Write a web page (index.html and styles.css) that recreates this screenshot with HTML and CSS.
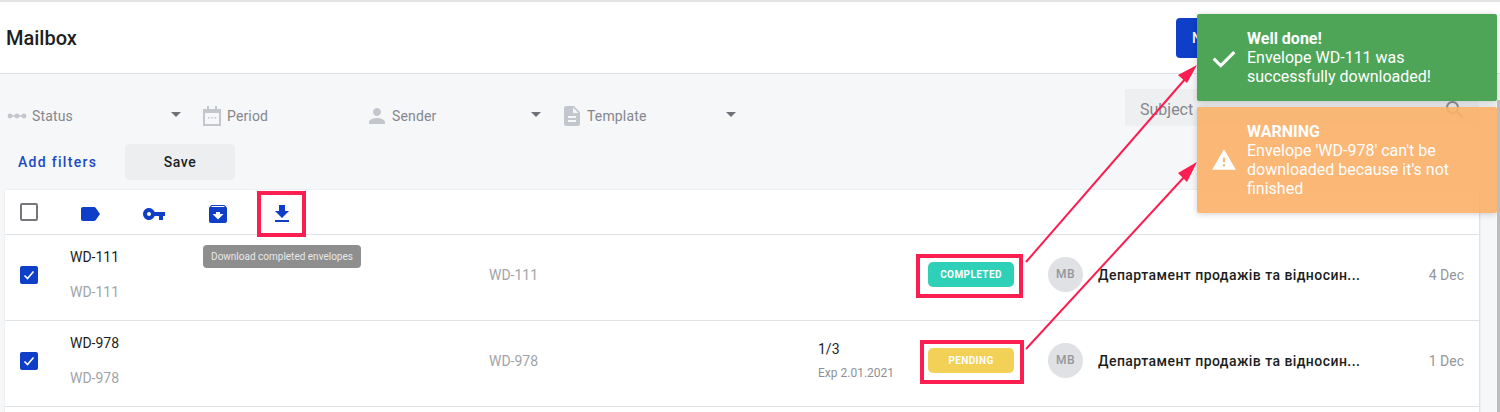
FILE: index.html
```html
<!DOCTYPE html>
<html>
<head>
  <title>Mailbox</title>
  <meta name="viewport" content="width=device-width, initial-scale=1">
  <link rel="stylesheet" href="styles.css">
</head>
<body>
  <div class="page">
    <header class="topbar">
      <h1>Mailbox</h1>
      <button class="new-btn">New</button>
    </header>

    <section class="filters">
      <div class="filter-row">
        <div class="filter filter-status">
          <svg class="filter-icon" width="20" height="8" viewBox="0 0 20 8"><path d="M3 4h14" stroke="#c3c6cc" stroke-width="1.5"/><circle cx="3" cy="4" r="2.4" fill="#c3c6cc"/><circle cx="10" cy="4" r="2.4" fill="#c3c6cc"/><circle cx="17" cy="4" r="2.4" fill="#c3c6cc"/></svg>
          <span>Status</span>
          <i class="caret"></i>
        </div>
        <div class="filter filter-period">
          <svg class="filter-icon" width="18" height="20" viewBox="0 0 18 20"><path d="M1 4h16v15H1z" fill="none" stroke="#c3c6cc" stroke-width="2"/><path d="M1 3h16v4H1zM4 0h2v4H4zM12 0h2v4h-2z" fill="#c3c6cc"/><path d="M5 11h1.500v1.500H5zM8.300 11h1.500v1.500H8.300zM11.600 11h1.500v1.500h-1.500z" fill="#c3c6cc"/></svg>
          <span>Period</span>
        </div>
        <div class="filter filter-sender">
          <svg class="filter-icon" width="16" height="16" viewBox="4 4 16 16"><path d="M12 12c2.210 0 4-1.790 4-4s-1.790-4-4-4-4 1.790-4 4 1.790 4 4 4zm0 2c-2.670 0-8 1.340-8 4v2h16v-2c0-2.660-5.330-4-8-4z" fill="#c3c6cc"/></svg>
          <span>Sender</span>
          <i class="caret"></i>
        </div>
        <div class="filter filter-template">
          <svg class="filter-icon" width="16" height="20" viewBox="4 2 16 20"><path d="M14 2H6c-1.100 0-1.990.9-1.990 2L4 20c0 1.100.89 2 1.990 2H18c1.100 0 2-.9 2-2V8l-6-6zm2 16H8v-2h8v2zm0-4H8v-2h8v2zm-3-5V3.500L18.500 9H13z" fill="#c3c6cc"/></svg>
          <span>Template</span>
          <i class="caret"></i>
        </div>
        <div class="subject-search">
          <span>Subject</span>
          <svg width="24" height="24" viewBox="0 0 24 24"><path d="M15.500 14h-.79l-.28-.27C15.410 12.590 16 11.110 16 9.500 16 5.910 13.090 3 9.500 3S3 5.910 3 9.500 5.910 16 9.500 16c1.610 0 3.090-.59 4.230-1.570l.27.28v.79l5 4.990L20.490 19l-4.990-5zm-6 0C7.010 14 5 11.990 5 9.500S7.010 5 9.500 5 14 7.010 14 9.500 11.990 14 9.500 14z" fill="#8d9095"/></svg>
        </div>
      </div>
      <div class="filter-actions">
        <a class="add-filters">Add filters</a>
        <button class="save-btn">Save</button>
      </div>
    </section>

    <section class="card">
      <div class="toolbar">
        <span class="checkbox"></span>
        <svg class="tool" width="24" height="24" viewBox="0 0 24 24"><path d="M17.630 5.840C17.270 5.330 16.670 5 16 5L5 5.010C3.900 5.010 3 5.900 3 7v10c0 1.100.9 1.990 2 1.990L16 19c.67 0 1.270-.33 1.630-.84L22 12l-4.370-6.160z"/></svg>
        <svg class="tool" width="24" height="24" viewBox="0 0 24 24"><path d="M12.650 10C11.830 7.670 9.610 6 7 6c-3.310 0-6 2.690-6 6s2.690 6 6 6c2.610 0 4.830-1.670 5.650-4H17v4h4v-4h2v-4H12.650zM7 14c-1.100 0-2-.9-2-2s.9-2 2-2 2 .9 2 2-.9 2-2 2z"/></svg>
        <svg class="tool" width="24" height="24" viewBox="0 0 24 24"><path d="M20.540 5.230l-1.390-1.680C18.880 3.210 18.470 3 18 3H6c-.47 0-.88.21-1.160.55L3.460 5.230C3.170 5.570 3 6.020 3 6.500V19c0 1.100.9 2 2 2h14c1.100 0 2-.9 2-2V6.500c0-.48-.17-.93-.46-1.270zM12 17.500L6.500 12H10v-2h4v2h3.500L12 17.500zM5.120 5l.81-1h12l.94 1H5.120z"/></svg>
        <svg class="tool" width="24" height="24" viewBox="0 0 24 24"><path d="M19 9h-4V3H9v6H5l7 7 7-7zM5 18v2h14v-2H5z"/></svg>
      </div>

      <div class="row">
        <span class="checkbox checked"><svg width="18" height="18" viewBox="0 0 18 18"><path d="M4.500 9.500l3 3 6-7" fill="none" stroke="#fff" stroke-width="1.600"/></svg></span>
        <div class="name"><div>WD-111</div><div class="muted">WD-111</div></div>
        <div class="muted subject">WD-111</div>
        <div class="signed"></div>
        <div><span class="badge badge-completed">COMPLETED</span></div>
        <div class="avatar">MB</div>
        <div class="sender">Департамент продажів та відносин...</div>
        <div class="date">4 Dec</div>
      </div>

      <div class="row">
        <span class="checkbox checked"><svg width="18" height="18" viewBox="0 0 18 18"><path d="M4.500 9.500l3 3 6-7" fill="none" stroke="#fff" stroke-width="1.600"/></svg></span>
        <div class="name"><div>WD-978</div><div class="muted">WD-978</div></div>
        <div class="muted subject">WD-978</div>
        <div class="signed"><div>1/3</div><div class="exp">Exp 2.01.2021</div></div>
        <div><span class="badge badge-pending">PENDING</span></div>
        <div class="avatar">MB</div>
        <div class="sender">Департамент продажів та відносин...</div>
        <div class="date">1 Dec</div>
      </div>
    </section>
  </div>

  <div class="tooltip">Download completed envelopes</div>

  <!-- red marks drawn on top of the screenshot -->
  <svg class="marks" width="1500" height="412" viewBox="0 0 1500 412">
    <g fill="none" stroke="#fb1e51" stroke-width="4">
      <rect x="259" y="193" width="45" height="42"/>
      <rect x="918" y="256" width="103" height="40"/>
      <rect x="922" y="342" width="100" height="40"/>
    </g>
    <g stroke="#fb1e51" stroke-width="2">
      <path d="M1026 262L1186 78"/>
      <path d="M1026 349L1186 175"/>
    </g>
    <g fill="#fb1e51">
      <path d="M1197 65L1187 83L1178 75z"/>
      <path d="M1197 162L1187 182L1178 173z"/>
    </g>
  </svg>

  <div class="toast toast-success">
    <svg width="26" height="26" viewBox="0 0 24 24"><path d="M1.500 13.500L3.500 11.500L9 17L20.500 5.500L22.500 7.500L9 21z" fill="#fff"/></svg>
    <div>
      <b>Well done!</b>
      <div>Envelope WD-111 was successfully downloaded!</div>
    </div>
  </div>
  <div class="toast toast-warning">
    <svg width="26" height="26" viewBox="0 0 24 24"><path d="M1 21h22L12 2 1 21zm12-3h-2v-2h2v2zm0-4h-2v-4h2v4z" fill="#fff"/></svg>
    <div>
      <b>WARNING</b>
      <div>Envelope 'WD-978' can't be downloaded because it's not finished</div>
    </div>
  </div>

  <div class="edge-strip"></div>
</body>
</html>
```

FILE: styles.css
```css
/* Common styles */
body {
  margin: 0;
  background-color: #f6f7f9;
  color: #1c1e21;
  font-family: Roboto, "Liberation Sans", sans-serif;
  overflow: hidden;
}

.page {
  width: 1500px;
  height: 412px;
  overflow: hidden;
  border-top: 2px solid #e3e4e6;
  box-sizing: border-box;
}

button {
  border: none;
  font-family: inherit;
}

/* Header */
.topbar {
  height: 72px;
  box-sizing: border-box;
  display: flex;
  align-items: center;
  justify-content: space-between;
  padding: 0 21px 0 6px;
  background-color: #fff;
  border-bottom: 1px solid #dfe1e4;
}

.topbar h1 {
  margin: 0;
  font-size: 20px;
  font-weight: 500;
}

.new-btn {
  width: 303px;
  height: 40px;
  margin-top: 1px;
  padding: 0 0 0 16px;
  text-align: left;
  background-color: #0f3fc9;
  color: #fff;
  font-size: 14px;
  font-weight: 500;
  border-radius: 4px;
}

/* Filters */
.filters {
  height: 116px;
  box-sizing: border-box;
  padding-top: 15px;
}

.filter-row {
  display: flex;
  align-items: flex-start;
  height: 37px;
  padding-right: 21px;
}

.filter {
  display: flex;
  align-items: center;
  height: 36px;
  margin-top: 9px;
  padding-left: 7px;
  font-size: 14px;
  letter-spacing: 0.15px;
  color: #84878d;
  box-sizing: border-box;
}

.filter-status { width: 196px; }
.filter-period { width: 166px; }
.filter-sender { width: 195px; }
.filter-template { width: 568px; }

.filter-status .filter-icon { margin-right: 5px; }
.filter-period .filter-icon { margin-right: 6px; }
.filter-sender .filter-icon { margin-right: 7px; }
.filter-template .filter-icon { margin-right: 7px; }

.caret {
  width: 0;
  height: 0;
  margin-bottom: 4px;
  border-left: 5px solid transparent;
  border-right: 5px solid transparent;
  border-top: 5px solid #6f7278;
}

.filter-status .caret { margin-left: 98px; }
.filter-sender .caret { margin-left: 95px; }
.filter-template .caret { margin-left: 80px; }

.subject-search {
  flex: 1;
  height: 37px;
  display: flex;
  align-items: center;
  justify-content: space-between;
  padding: 0 12px 0 15px;
  background-color: #eeeff1;
  color: #84878d;
  font-size: 16px;
}

.subject-search span { margin-top: 3px; }
.subject-search svg { margin-top: 4px; }

.filter-actions {
  display: flex;
  align-items: center;
  margin-top: 18px;
  padding-left: 18px;
}

.add-filters {
  width: 107px;
  color: #1b49c4;
  font-size: 14px;
  font-weight: 500;
  letter-spacing: 1.3px;
}

.save-btn {
  width: 110px;
  height: 36px;
  background-color: #edeef0;
  color: #1c1e21;
  font-size: 14px;
  font-weight: 500;
  letter-spacing: 0.6px;
  border-radius: 4px;
}

/* Table card */
.card {
  min-height: 300px;
  margin: 0 20px 0 5px;
  background-color: #fff;
  border-right: 1px solid #e0e2e5;
  box-shadow: 0 0 2px rgba(0, 0, 0, 0.1);
}

.toolbar {
  height: 45px;
  box-sizing: border-box;
  display: flex;
  align-items: center;
  gap: 40px;
  padding-left: 15px;
  border-bottom: 1px solid #e0e2e5;
}

.tool {
  fill: #0f3fc9;
  margin-top: 4px;
}

.checkbox {
  display: block;
  width: 18px;
  height: 18px;
  box-sizing: border-box;
  border: 2px solid #75777b;
  border-radius: 2px;
  flex-shrink: 0;
}

.checkbox.checked {
  background-color: #0f3fc9;
  border: none;
}

.row {
  height: 86px;
  box-sizing: border-box;
  display: grid;
  grid-template-columns: 50px 419px 329px 110px 120px 50px 1fr auto;
  align-items: center;
  padding: 0 15px 6px;
  border-bottom: 1px solid #e0e2e5;
  font-size: 14px;
}

.muted { color: #a1a4a9; }

.name div + div { margin-top: 19px; }

.exp {
  margin-top: 9px;
  font-size: 12px;
  color: #8d9096;
}

.badge {
  display: block;
  width: 86px;
  height: 25px;
  line-height: 26px;
  text-align: center;
  color: #fff;
  font-size: 10px;
  font-weight: 700;
  letter-spacing: 0.4px;
  border-radius: 5px;
}

.badge-completed { background-color: #2ed0b7; }
.badge-pending { background-color: #f3d056; }

.avatar {
  width: 35px;
  height: 35px;
  line-height: 35px;
  text-align: center;
  border-radius: 50%;
  background-color: #dfe1e4;
  color: #94979c;
  font-size: 12px;
  font-weight: 500;
  letter-spacing: 0.5px;
}

.sender {
  font-weight: 500;
  letter-spacing: 0.45px;
}

.date { color: #94979c; }

/* Tooltip */
.tooltip {
  position: absolute;
  left: 203px;
  top: 245px;
  width: 158px;
  height: 23px;
  line-height: 23px;
  text-align: center;
  background-color: #8e8e8e;
  color: #e9e9e9;
  font-size: 10px;
  border-radius: 4px;
}

/* Annotation layer */
.marks {
  position: absolute;
  left: 0;
  top: 0;
  pointer-events: none;
}

/* Notifications */
.toast {
  position: absolute;
  left: 1197px;
  width: 300px;
  box-sizing: border-box;
  display: flex;
  align-items: center;
  gap: 10px;
  padding: 0 20px 0 14px;
  color: #fff;
  font-size: 16px;
  line-height: 19px;
  border-radius: 2px;
  box-shadow: 0 1px 6px rgba(0, 0, 0, 0.2);
}

.toast svg { flex-shrink: 0; }

.toast b { font-weight: 700; }

.toast-success {
  top: 14px;
  height: 87px;
  background-color: #4ea558;
}

.toast-warning {
  top: 107px;
  height: 106px;
  background-color: #fbb168;
  opacity: 0.9;
}

/* grey strip down the right edge of the shot */
.edge-strip {
  position: absolute;
  left: 1497px;
  top: 100px;
  width: 3px;
  height: 312px;
  background-color: #bdbdbd;
}
```
